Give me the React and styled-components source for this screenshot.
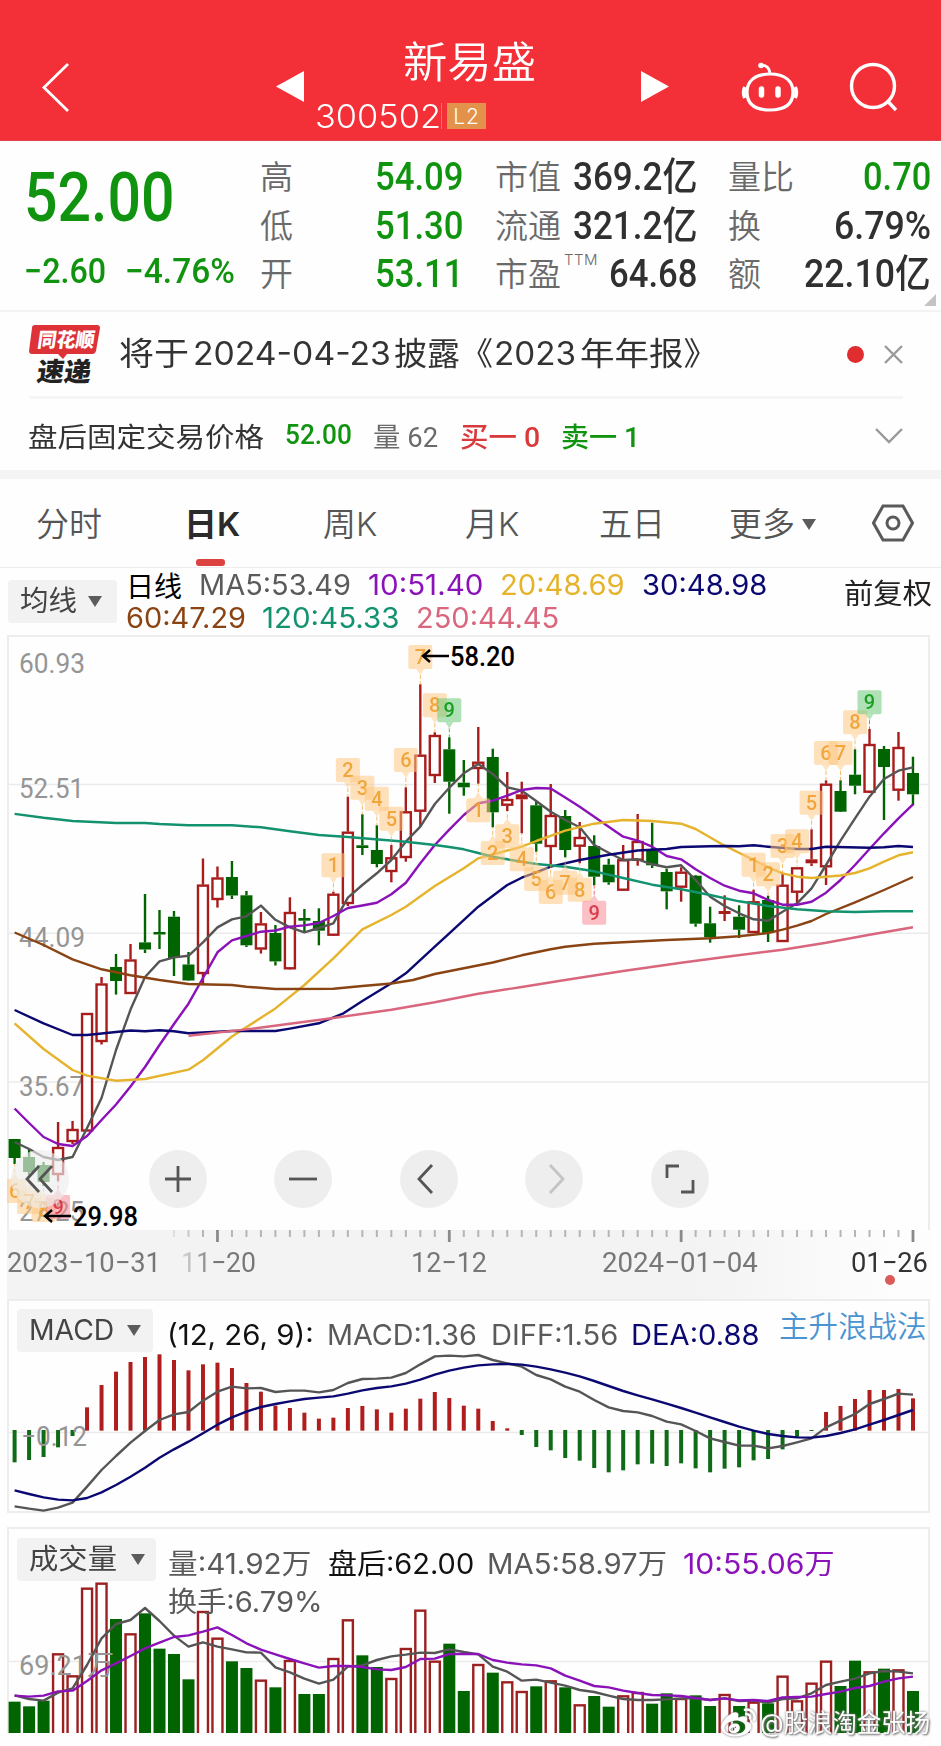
import React, { useLayoutEffect, useRef, useState } from "react";
import styled, { createGlobalStyle } from "styled-components";
import { FaWeibo } from "react-icons/fa";

const SANS = `Inter, "Noto Sans CJK SC", sans-serif`;
const DIN = `Roboto, "Noto Sans CJK SC", sans-serif`;
const RED = "#a81c1c";
const GREEN = "#006400";
const MA_COLORS = {
  5: "#555555",
  10: "#8a12b8",
  20: "#e5b32c",
  30: "#0b0872",
  60: "#8a4413",
  120: "#139270",
  250: "#d9667c"
};

const GlobalStyle = createGlobalStyle`
  * { box-sizing: border-box; }
  body { margin: 0; background: #fefefe; font-family: ${SANS}; }
`;

const Page = styled.div`
  width: 941px;
  height: 1746px;
  overflow: hidden;
  background: #fefefe;
  color: #333;
`;

// ---------- text squeezed to a fixed width ----------
const FitBox = styled.span`
  display: inline-block;
  flex: none;
  width: ${p => p.$width}px;
  margin-left: ${p => p.$gap || 0}px;
  color: ${p => p.$color || "inherit"};
  white-space: nowrap;
`;
const FitInner = styled.span`
  display: inline-block;
  transform-origin: left center;
`;
function Fit({ width, gap, color, children }) {
  const ref = useRef(null);
  const [scale, setScale] = useState(1);
  useLayoutEffect(() => {
    setScale(width / ref.current.offsetWidth);
  }, [width, children]);
  return (
    <FitBox $width={width} $gap={gap} $color={color}>
      <FitInner ref={ref} style={{ transform: `scaleX(${scale})` }}>
        {children}
      </FitInner>
    </FitBox>
  );
}

// ---------- header ----------
const Header = styled.header`
  display: flex;
  align-items: flex-start;
  height: 141px;
  padding: 0 38px 0 41px;
  background: #f32f37;
  color: #fff;
  border-bottom: 1px solid #d9474d;
`;
const HeaderIcon = styled.svg`
  flex: none;
  margin-top: ${p => p.$top}px;
  margin-left: ${p => p.$left || 0}px;
  overflow: visible;
`;
const TitleBlock = styled.div`
  width: 337px;
  padding-top: 31px;
`;
const StockName = styled.div`
  padding-left: 99px;
  font-size: 43px;
  line-height: 62px;
  font-weight: 350;
`;
const StockCode = styled.div`
  display: flex;
  align-items: center;
  height: 46px;
  padding-left: 11px;
  font-size: 33px;
  font-weight: 300;
`;
const LevelTag = styled.span`
  display: flex;
  align-items: center;
  justify-content: center;
  width: 39px;
  height: 26px;
  margin-left: 6px;
  background: #e2924a;
  font-size: 21px;
  letter-spacing: 1px;
  box-shadow: -5px 0 0 0 #f32f37, -6px 0 0 0 #ee7a50;
`;

// ---------- quote ----------
const Quote = styled.section`
  position: relative;
  display: flex;
  height: 171px;
  padding: 12px 10px 0 24px;
  border-bottom: 2px solid #f3f3f3;
  font-family: ${DIN};
  font-weight: 500;
`;
const PriceBlock = styled.div`
  width: 236px;
  color: #109410;
`;
const Price = styled.div`
  height: 95px;
  padding-top: 6px;
  font-size: 68px;
  line-height: 79px;
`;
const Change = styled.div`
  padding-top: 1px;
  font-size: 35px;
  line-height: 46px;
`;
const QuoteColumn = styled.div`
  width: ${p => p.$width}px;
  margin-right: ${p => p.$gap || 0}px;
`;
const QuoteRow = styled.div`
  display: flex;
  align-items: center;
  justify-content: space-between;
  height: 48.4px;
  font-size: 39px;
  line-height: 48px;
  color: ${p => (p.$down ? "#109410" : "#303030")};
`;
const QuoteLabel = styled.span`
  position: relative;
  padding-top: 2px;
  color: #6a6a6a;
  font-size: 33px;
  font-weight: 350;
`;
const Ttm = styled.sup`
  position: absolute;
  left: 69px;
  top: 3px;
  font-family: ${SANS};
  font-size: 15px;
  line-height: 15px;
  letter-spacing: 0.5px;
`;
const Corner = styled.i`
  position: absolute;
  right: 5px;
  bottom: 4px;
  border: 6px solid #c4c4c4;
  border-top-color: transparent;
  border-left-color: transparent;
`;

// ---------- notices ----------
const Notice = styled.div`
  display: flex;
  align-items: center;
  height: 87px;
  margin: 0 38px 0 29px;
  border-bottom: 3px solid #f5f5f5;
  font-size: 32px;
  line-height: 44px;
  color: #333;
`;
const Dot = styled.i`
  width: 17px;
  height: 17px;
  margin-left: auto;
  margin-right: 20px;
  border-radius: 50%;
  background: #e02e30;
`;
const AfterHours = styled.div`
  display: flex;
  align-items: center;
  height: 71px;
  padding: 1px 38px 0 28px;
  font-family: ${DIN};
  font-size: 27px;
  > svg {
    margin-left: auto;
  }
`;
const Strong = styled.b`
  font-weight: 500;
`;
const Band = styled.div`
  height: 9px;
  background: #f4f4f4;
`;

// ---------- tabs ----------
const Tabs = styled.nav`
  display: flex;
  align-items: center;
  height: 89px;
  padding-left: 36px;
  border-bottom: 1px solid #ececec;
  font-size: 33px;
  color: #555;
`;
const Tab = styled.div`
  position: relative;
  flex: none;
  width: ${p => p.$width}px;
  height: 88px;
  line-height: 90px;
  white-space: nowrap;
  font-weight: ${p => (p.$active ? 600 : 350)};
  color: ${p => (p.$active ? "#2b2b2b" : "#555")};
  &::after {
    content: "";
    display: ${p => (p.$active ? "block" : "none")};
    position: absolute;
    left: 12px;
    bottom: 1px;
    width: 29px;
    height: 7px;
    border-radius: 3px;
    background: #dc4340;
  }
`;
const Triangle = styled.i`
  display: inline-block;
  flex: none;
  margin-left: ${p => p.$left || 0}px;
  margin-bottom: ${p => p.$lift || 0}px;
  vertical-align: middle;
  border: 7.5px solid transparent;
  border-top: 11px solid #5c5c5c;
  border-bottom: 0;
`;

// ---------- indicator legends ----------
const Select = styled.div`
  display: flex;
  flex: none;
  align-items: center;
  width: ${p => p.$width}px;
  height: 43px;
  padding-left: 12px;
  border-radius: 4px;
  background: #f2f2f2;
  color: #444;
  font-size: 28px;
  line-height: 40px;
  > span {
    margin-bottom: 2px;
  }
`;
const MaBar = styled.div`
  display: flex;
  align-items: flex-start;
  height: 67px;
  padding: 12px 9px 0 8px;
  font-size: 28px;
`;
const Legend = styled.div`
  margin-top: ${p => p.$top || 0}px;
  margin-left: ${p => p.$left || 0}px;
`;
const LegendLine = styled.div`
  display: flex;
  align-items: center;
  height: ${p => p.$height || 33}px;
  font-size: 28px;
  color: #5a5a5a;
`;
const Adjust = styled.div`
  margin-left: auto;
  line-height: 28px;
  color: #222;
`;

// ---------- panels ----------
const Panel = styled.section`
  position: relative;
  width: 923px;
  height: ${p => p.$height}px;
  margin: 0 0 ${p => p.$gap || 0}px 7px;
  border: 2px solid #ededed;
  border-bottom-width: ${p => (p.$open ? 0 : 2)}px;
`;
const Plot = styled.svg`
  position: absolute;
  left: -2px;
  top: -2px;
`;
const TickMarks = styled.svg`
  position: absolute;
  left: 0;
  top: -2px;
`;
const PanelHead = styled.div`
  position: relative;
  display: flex;
  align-items: flex-start;
  padding: ${p => p.$top}px 0 0 8px;
`;
const Strategy = styled.div`
  margin-left: 20px;
  color: #4b94d2;
  font-size: 29.5px;
  line-height: 34px;
  font-weight: 350;
`;
const Controls = styled.div`
  position: absolute;
  left: 2px;
  bottom: 22px;
  display: flex;
  gap: 67.6px;
`;
const RoundButton = styled.button`
  display: flex;
  align-items: center;
  justify-content: center;
  width: 58px;
  height: 58px;
  padding: 0;
  margin-right: ${p => (p.$first ? 12 : 0)}px;
  border: 0;
  border-radius: 50%;
  background: ${p => (p.$first ? "rgba(236,236,236,0.65)" : "#eeeeee")};
  color: ${p => (p.$muted ? "#c4c4c4" : "#555")};
`;
const Axis = styled.div`
  position: relative;
  width: 923px;
  height: 69px;
  margin-left: 7px;
  background: linear-gradient(to right, #f3f3f3 75%, #fdfdfd 96%);
`;
const AxisDates = styled.div`
  display: flex;
  padding-top: 16px;
  color: #777;
  font-family: ${DIN};
  font-size: 28px;
  line-height: 34px;
`;
const AxisDot = styled.i`
  position: absolute;
  right: 35px;
  top: 45px;
  width: 10px;
  height: 10px;
  border-radius: 50%;
  background: #dc5a5a;
`;
const Fade = styled.span`
  background: linear-gradient(to right, #d8d8d8, #777 45%);
  background-clip: text;
  color: transparent;
`;
const Watermark = styled.div`
  position: absolute;
  right: -2px;
  bottom: -8px;
  display: flex;
  align-items: center;
  color: #fff;
  font-size: 25px;
  line-height: 36px;
  text-shadow: 0 0 3px #777, 1px 1px 2px #777;
  svg {
    margin-right: 4px;
    filter: drop-shadow(0 0 1px #666);
  }
`;

const cx = i => 14.6 + i * 14.49;

// open/close top, bottom, high, low; u = hollow rise, d = fall, r = solid rise
const CANDLES = [
  ["d", 1139, 1158, 1139, 1164], ["d", 1157, 1172, 1149, 1175], ["d", 1165, 1182, 1162, 1186],
  ["u", 1147, 1175, 1122, 1181], ["u", 1129, 1142, 1121, 1144], ["u", 1013, 1131.5, 1013, 1131.5],
  ["u", 983.5, 1042, 977, 1044.5], ["d", 967, 981, 954, 994.6], ["u", 959.5, 994, 944, 994],
  ["d", 942.4, 949.5, 894, 953], ["d", 932, 934.5, 910, 949], ["d", 916.7, 958, 911, 976],
  ["d", 964.5, 980.5, 952, 980], ["u", 884.6, 974, 858.5, 984], ["u", 877.5, 900, 866.5, 907.6],
  ["d", 877, 895.5, 861, 899], ["d", 895.3, 945.3, 891, 947], ["u", 923.4, 949.5, 912, 953.5],
  ["d", 933, 961.4, 925, 965.5], ["u", 912, 969.3, 897.3, 969], ["d", 918, 920.7, 909, 931.7],
  ["d", 921, 930.7, 908.3, 945.3], ["u", 893.7, 935.7, 891.7, 935], ["u", 831.7, 904, 796.7, 906],
  ["d", 845.3, 848, 814.3, 855], ["d", 850, 864, 825.3, 867.3], ["u", 857.3, 872, 845, 882.3],
  ["u", 811.3, 858, 787.3, 861.7], ["u", 754.7, 811.7, 684.3, 826.7], ["u", 735, 776, 732.3, 783],
  ["d", 749.3, 781.7, 737.3, 813.7], ["d", 782.7, 787.3, 760, 795.7], ["u", 761.7, 769, 727, 783.7],
  ["d", 757, 812.3, 748.7, 827.3], ["u", 799, 805.7, 772, 811], ["r", 794.3, 799.3, 781.7, 833.3],
  ["d", 805.3, 843.7, 801.3, 851.7], ["u", 815, 847, 784, 864.3], ["d", 816, 850, 810, 857.3],
  ["u", 837, 846.7, 822, 863.3], ["d", 846, 876.7, 835.3, 885.3], ["d", 864.7, 882.3, 858.7, 884.7],
  ["u", 859.3, 890.7, 845, 890], ["u", 841, 860.7, 814, 865.7], ["d", 849.7, 865.3, 822.7, 868],
  ["d", 872, 891.3, 868.7, 909.3], ["u", 871.7, 887.7, 867.3, 901.7], ["d", 875.7, 923.7, 875, 926.7],
  ["d", 923.3, 937.3, 906.7, 942.7], ["r", 911, 914, 895.3, 921], ["d", 916.7, 929.7, 905.3, 938],
  ["u", 901.3, 933, 889.7, 933], ["d", 900, 933, 895.7, 942], ["u", 884.7, 942, 873.3, 942],
  ["u", 867.3, 892.7, 867.3, 904], ["r", 859.3, 863.3, 829.3, 866], ["u", 783.7, 867.3, 780.3, 885],
  ["d", 791, 811.7, 780.3, 811], ["d", 774.7, 785.7, 749.3, 794.3], ["u", 744, 792.7, 729, 792],
  ["d", 749, 767, 746, 820], ["u", 747, 790.7, 732, 800.7], ["d", 773, 794.3, 756.7, 805.3]
];

// [candle index, top of the flag, digit, pointer side]
const FLAGS = [
  [0, 1179, 6, "up"], [1, 1190, 7, "up"], [2, 1198, 8, "up"], [3, 1195, 9, "up"],
  [22, 853.3, 1], [23, 758, 2], [24, 775.7, 3], [25, 786.7, 4], [26, 806.7, 5], [27, 748, 6],
  [28, 645, 7], [29, 693.3, 8], [30, 698.3, 9],
  [32, 798.3, 1, "up"], [33, 841, 2, "up"], [34, 824.3, 3, "up"], [35, 847.3, 4, "up"],
  [36, 867, 5, "up"], [37, 880, 6, "up"], [38, 870.7, 7, "up"], [39, 877.7, 8, "up"], [40, 900.7, 9, "up"],
  [51, 852.7, 1], [52, 862.3, 2], [53, 834, 3], [54, 829.3, 4], [55, 790.7, 5], [56, 741, 6],
  [57, 741, 7], [58, 710.3, 8], [59, 690.3, 9]
];

const MA = {
  5: [1142, 1149, 1157, 1160, 1157, 1128, 1098, 1050, 1009.6, 977, 961.4, 957.4, 955.8, 942.4, 927.4,
    919.4, 916.3, 905.6, 919.8, 927.4, 932.3, 928, 923.3, 897.7, 885, 873.3, 860, 841.7, 826.7, 804,
    787.7, 773.3, 764, 774, 787.3, 790.7, 801, 811.7, 820, 827.3, 845, 852.7, 860, 859.3, 864.3, 867.3,
    865.3, 880, 896.7, 906, 913.3, 919.3, 920.7, 911.7, 903.3, 888.3, 865, 840.7, 818.3, 796.7, 779,
    770.7, 767.3],
  10: [1108.5, 1123, 1137, 1144, 1146, 1136, 1120, 1104.5, 1086.5, 1067, 1045, 1024, 1003.7, 978, 952.3,
    940.4, 936, 931.7, 930.5, 926.6, 925.4, 923, 916, 908, 905.5, 902.7, 894.3, 882.7, 863.3, 845,
    829.7, 815, 803.3, 800.7, 795.7, 790, 788, 788.5, 797.5, 806.7, 816.7, 826.7, 836.7, 840.7, 846.7,
    856, 859.3, 869.3, 878, 885.7, 890.7, 893.3, 900, 904.7, 904.7, 901.7, 892.7, 880, 865, 849, 833.3,
    818.3, 804.3],
  20: [[0, 1023.4], [2, 1049], [4, 1070], [5, 1075.6], [7, 1080.8], [9, 1079], [12, 1069.7], [13, 1060.2],
    [15, 1036.5], [18, 1008.4], [20, 985], [22, 958.3], [24, 929.3], [26, 915], [27, 906.7], [29, 886],
    [31, 868.3], [32, 858.3], [33, 854.5], [35, 846.7], [36, 841], [38, 830.7], [40, 823.7], [42, 820],
    [44, 821], [46, 823.7], [47, 829], [49, 845.7], [51, 860], [52, 867.3], [53, 873.3], [54, 876.7],
    [55, 878], [56, 876.7], [57, 875.5], [58, 873], [59, 868.3], [60, 861.7], [61, 855.3], [62, 852.3]],
  30: [[0, 1010], [2, 1023.4], [4, 1035], [5, 1035], [8, 1030.5], [9, 1031.3], [10, 1030.2], [11, 1031.3],
    [12, 1033.3], [13, 1032.5], [15, 1031], [18, 1031], [19, 1028.6], [21, 1023.3], [22.7, 1013.3],
    [24, 1001], [26, 983.3], [27, 973.3], [29, 946.7], [30, 933.3], [32, 906.7], [34, 885], [35, 877.7],
    [36, 872.3], [37, 866.7], [39, 860], [41, 854.7], [43, 850.5], [45, 849], [46, 847], [48, 846.3],
    [49, 846], [50, 846.3], [51, 845.3], [52, 846.7], [54, 849], [55, 849], [56, 846.7], [59, 847.7],
    [60, 847.3], [61, 846], [62, 847]],
  60: [[0, 932.5], [2, 945], [4, 959.4], [6, 969.3], [8, 975.2], [10, 980], [12, 984], [15, 985],
    [16, 986.7], [18, 989], [22, 988.7], [24, 986], [26, 983.5], [27.5, 980], [29, 974], [31, 968.3],
    [33, 962.5], [35, 955.3], [37, 949.3], [38, 946.7], [40, 943.7], [42, 942.3], [45, 940], [48, 938.3],
    [50, 936.3], [52, 933], [53, 929.7], [54, 925.7], [55, 921], [56, 914], [58, 902.3], [60, 890], [62, 877]],
  120: [[0, 813.9], [2, 817.8], [4, 821], [7, 823], [9, 823], [10, 824], [12, 825.3], [15, 825.3],
    [17, 827.3], [19, 831.3], [21, 835], [23, 837], [27, 841.7], [29, 845], [30, 847], [31, 849.3],
    [32, 853], [33, 856.7], [34, 859.3], [36, 864], [38, 866.7], [40, 871.3], [42, 878], [44, 884.7],
    [46, 889.3], [48, 895], [50, 901.3], [52, 906], [54, 909.3], [56, 911.3], [58, 912], [60, 911.3], [62, 911.3]],
  250: [[12, 1035.7], [16, 1029.4], [19, 1023.8], [22, 1018], [26, 1009.7], [29, 1002.3], [32, 993.7],
    [35, 987], [38, 980], [42, 971], [46, 962.7], [49, 957], [53, 949.7], [56, 942.7], [59, 934.7], [62, 927.3]]
};

// MACD and volume values are in thirds of a pixel, measured down from the panel origin
const HIST = [
  517, 510, 501, 472, 438, 352, 285, 245, 216, 201, 193, 210, 241, 223, 218, 234, 279, 305, 347, 354, 368,
  386, 383, 354, 348, 358, 368, 356, 326, 306, 324, 347, 356, 393, 415, 435, 471, 481, 504, 512, 534, 547,
  541, 523, 521, 528, 520, 535, 547, 536, 532, 511, 507, 478, 444, 423, 366, 348, 327, 300, 300, 297, 325
];
const DIFF = [
  649, 656, 662, 653, 638, 590, 540, 498, 458, 423, 390, 373, 366, 332, 305, 290, 295, 294, 306, 302, 302,
  307, 300, 279, 267, 266, 263, 249, 223, 199, 197, 199, 195, 210, 220, 230, 255, 268, 290, 305, 330, 352,
  363, 367, 378, 395, 403, 423, 445, 456, 467, 467, 475, 468, 457, 445, 412, 392, 372, 342, 327, 311, 314
];
const DEA = [
  601, 612, 622, 629, 631, 624, 607, 585, 560, 533, 503, 478, 455, 430, 404, 382, 365, 351, 342, 334, 327,
  323, 319, 311, 301, 294, 289, 281, 269, 254, 242, 233, 226, 223, 222, 224, 230, 238, 248, 259, 273, 288,
  303, 316, 328, 341, 354, 368, 382, 396, 410, 422, 432, 438, 442, 443, 438, 429, 418, 404, 390, 375, 360
];
const VOLUME = [
  545, 559, 542, 400, 466, 203, 188, 297, 340, 280, 386, 402, 478, 273, 353, 424, 444, 479, 502, 420, 522,
  522, 414, 298, 406, 441, 474, 384, 269, 422, 371, 513, 432, 458, 484, 513, 499, 481, 502, 553, 528, 560,
  526, 516, 551, 520, 534, 526, 558, 522, 558, 545, 550, 467, 541, 488, 422, 498, 422, 454, 446, 448, 513
];
const VOL5 = [
  526, 537, 542, 518, 505, 435, 355, 312, 300, 264, 303, 347, 380, 367, 380, 388, 397, 398, 442, 457, 476,
  491, 479, 440, 436, 420, 409, 404, 398, 399, 388, 396, 403, 440, 455, 482, 479, 488, 497, 510, 516, 527,
  537, 540, 540, 538, 535, 534, 540, 535, 543, 542, 548, 537, 535, 520, 495, 485, 476, 460, 453, 455, 460
];
const VOL10 = [
  527, 530, 527, 514, 512, 483, 451, 430, 408, 385, 368, 351, 346, 335, 322, 345, 370, 389, 403, 417, 430,
  443, 438, 438, 441, 448, 450, 441, 417, 416, 402, 402, 402, 420, 428, 433, 436, 445, 467, 482, 498, 502,
  512, 519, 525, 526, 528, 534, 540, 535, 541, 540, 543, 532, 531, 530, 522, 515, 504, 498, 485, 475, 470
];

// indexes of the filled volume bars
const SOLID_VOLUME = [0, 1, 2, 7, 9, 10, 11, 12, 15, 16, 18, 20, 21, 24, 25, 30, 31, 33, 36, 38, 40, 41,
  44, 45, 47, 48, 50, 52, 57, 58, 60, 62];

const toPoints = (list, y = v => v) =>
  list.map((p, i) => (Array.isArray(p) ? `${cx(p[0])},${y(p[1])}` : `${cx(i)},${y(p)}`)).join(" ");

function Line({ data, y, color, width = 2.4 }) {
  return (
    <polyline points={toPoints(data, y)} fill="none" stroke={color} strokeWidth={width} strokeLinejoin="round" />
  );
}

function ScaleText({ x, y, width, color = "#959595", weight = 400, children }) {
  return (
    <text x={x} y={y} textLength={width} lengthAdjust="spacingAndGlyphs" fontFamily={DIN}
      fontSize="28" fontWeight={weight} fill={color}>
      {children}
    </text>
  );
}

function Flag({ index, top, digit, up }) {
  const x = cx(index);
  const [bg, fg] =
    digit !== 9 ? ["#fdc981", "#efa02f"] : up ? ["#f88a96", "#d9303c"] : ["#6cc878", "#0b9a12"];
  const wick = CANDLES[index][up ? 4 : 3];
  return (
    <g>
      <path
        d={up ? `M${x - 4} ${top}l4 -6l4 6z` : `M${x - 4} ${top + 24}l4 6l4 -6z`}
        fill={bg}
        opacity="0.5"
      />
      <rect x={x - 12} y={top} width="24" height="24" rx="2" fill={bg} opacity="0.55" />
      <line x1={x} x2={x} y1={up ? top - 6 : top + 30} y2={wick} stroke={fg} strokeDasharray="4 2" opacity="0.7" />
      <text x={x} y={top + 19} textAnchor="middle" fontFamily={DIN} fontSize="20" fontWeight="500" fill={fg} opacity="0.9">
        {digit}
      </text>
    </g>
  );
}

function Candle({ index, data }) {
  const [kind, top, bottom, high, low] = data;
  const x = cx(index);
  const color = kind === "d" ? GREEN : RED;
  return (
    <g stroke={color} strokeWidth="2.4">
      <line x1={x} x2={x} y1={high} y2={top} />
      <line x1={x} x2={x} y1={bottom} y2={low} />
      {kind === "u" ? (
        <rect x={x - 5} y={top + 1} width="10" height={bottom - top - 2} fill="#fff" fillOpacity="0.7" />
      ) : (
        <rect x={x - 6} y={top} width="12" height={bottom - top} fill={color} stroke="none" />
      )}
    </g>
  );
}

function Arrow({ x, y }) {
  return (
    <path d={`M${x + 27} ${y}H${x + 1}M${x + 8} ${y - 6}L${x + 1} ${y}l7 6`} fill="none" stroke="#000" strokeWidth="2.4" />
  );
}

function KLineChart() {
  return (
    <Plot width="923" height="596" viewBox="7 635 923 596">
      {[784.5, 933.3, 1082].map(y => (
        <line key={y} x1="8" x2="929" y1={y} y2={y} stroke="#ebebeb" strokeWidth="1.5" />
      ))}
      <ScaleText x={19} y={673} width={66}>60.93</ScaleText>
      <ScaleText x={19} y={798} width={65}>52.51</ScaleText>
      <ScaleText x={19} y={947} width={66}>44.09</ScaleText>
      <ScaleText x={19} y={1096} width={65}>35.67</ScaleText>
      <ScaleText x={19} y={1221} width={65}>27.25</ScaleText>
      {CANDLES.map((c, i) => (
        <Candle key={i} index={i} data={c} />
      ))}
      {Object.keys(MA).map(k => (
        <Line key={k} data={MA[k]} color={MA_COLORS[k]} />
      ))}
      {FLAGS.map(([i, top, digit, side]) => (
        <Flag key={i} index={i} top={top} digit={digit} up={side === "up"} />
      ))}
      <Arrow x={422} y={656} />
      <ScaleText x={450} y={666} width={65} color="#000" weight={500}>58.20</ScaleText>
      <Arrow x={44} y={1216} />
      <ScaleText x={73} y={1226} width={65} color="#000" weight={500}>29.98</ScaleText>
    </Plot>
  );
}

function MacdChart() {
  const y = v => 1290 + v / 3;
  return (
    <Plot width="923" height="214" viewBox="7 1299 923 214">
      <line x1="8" x2="929" y1="1432.5" y2="1432.5" stroke="#ebebeb" strokeWidth="1.5" />
      {HIST.map((v, i) => (
        <line key={i} x1={cx(i)} x2={cx(i)} y1={y(v < 420 ? 422 : 420)} y2={y(v)} strokeWidth="4"
          stroke={v < 420 ? "#b01d1d" : "#0f6b17"} />
      ))}
      <ScaleText x={21} y={1446} width={66}>−0.12</ScaleText>
      <Line data={DIFF} y={y} color={MA_COLORS[5]} />
      <Line data={DEA} y={y} color={MA_COLORS[30]} />
    </Plot>
  );
}

function VolumeChart() {
  const y = v => 1520 + v / 3;
  return (
    <Plot width="923" height="206" viewBox="7 1527 923 206">
      <line x1="8" x2="929" y1="1661.5" y2="1661.5" stroke="#ebebeb" strokeWidth="1.5" />
      {VOLUME.map((v, i) =>
        SOLID_VOLUME.includes(i) ? (
          <rect key={i} x={cx(i) - 6} y={y(v)} width="12" height={1733 - y(v)} fill={GREEN} />
        ) : (
          <rect key={i} x={cx(i) - 5} y={y(v) + 1} width="10" height={1740 - y(v)} fill="#fff" stroke="#9c2020" strokeWidth="2.4" />
        )
      )}
      <ScaleText x={19} y={1675} width={95}>69.21万</ScaleText>
      <Line data={VOL5} y={y} color={MA_COLORS[5]} />
      <Line data={VOL10} y={y} color={MA_COLORS[10]} />
    </Plot>
  );
}

function Ticks() {
  return (
    <TickMarks width="923" height="16" viewBox="7 1228 923 16">
      {CANDLES.map((_, i) => {
        if (i < 11) return null;
        const major = (i + 2) % 16 === 0;
        return (
          <line key={i} x1={cx(i)} x2={cx(i)} y1="1230" y2={major ? 1242 : 1237}
            stroke={major ? "#8a8a8a" : "#b5b5b5"} strokeWidth={major ? 2.8 : 2} opacity={i < 13 ? (i - 10) / 3 : 1} />
        );
      })}
    </TickMarks>
  );
}

function Icon({ d, size = 30, width = 2.8 }) {
  return (
    <svg width={size} height={size} viewBox="0 0 30 30" fill="none" stroke="currentColor" strokeWidth={width}>
      <path d={d} />
    </svg>
  );
}

function NewsLogo() {
  return (
    <svg width="72" height="60" viewBox="0 0 72 60">
      <path d="M6 1H68q3 0 3 3L67 27q-1 3 -3 3H38l-4 5l-5 -5H3q-3 0 -3 -3L3 4q0 -3 3 -3z" fill="#dc3238" />
      <g fontFamily={SANS} fontWeight="900" transform="skewX(-8)">
        <text x="11" y="23.5" fontSize="20" textLength="57" lengthAdjust="spacingAndGlyphs" fill="#fff">同花顺</text>
        <text x="15" y="57" fontSize="26" textLength="54" lengthAdjust="spacingAndGlyphs" fill="#222">速递</text>
      </g>
    </svg>
  );
}

export default function App() {
  return (
    <Page>
      <GlobalStyle />
      <Header>
        <HeaderIcon $top={63} width="29" height="49" fill="none" stroke="#fff" strokeWidth="2.8">
          <path d="M27 1L3 24.5L27 48" />
        </HeaderIcon>
        <HeaderIcon $top={71} $left={206} width="28" height="31" fill="#fff">
          <path d="M28 0V31L0 15.5z" />
        </HeaderIcon>
        <TitleBlock>
          <StockName><Fit width={133}>新易盛</Fit></StockName>
          <StockCode>
            <Fit width={126}>300502</Fit>
            <LevelTag>L2</LevelTag>
          </StockCode>
        </TitleBlock>
        <HeaderIcon $top={71} width="28" height="31" fill="#fff">
          <path d="M0 0V31L28 15.5z" />
        </HeaderIcon>
        <HeaderIcon $top={61} $left={73} width="58" height="52" fill="none" stroke="#fff" strokeWidth="3.2">
          <circle cx="19" cy="4.5" r="2.8" fill="#fff" stroke="none" />
          <path d="M19 4q8 0 9 8" strokeWidth="2.8" />
          <path d="M28 13c15 0 23 7 23 18s-7 18 -23 18s-23 -7 -23 -18s8 -18 23 -18z" />
          <path d="M3 26q-2.5 5.5 0 11M53 26q2.5 5.5 0 11" strokeWidth="4" />
          <path d="M19.5 28v6M36 28v6" strokeWidth="5.5" strokeLinecap="round" />
        </HeaderIcon>
        <HeaderIcon $top={62} $left={49} width="50" height="50" fill="none" stroke="#fff" strokeWidth="3.4">
          <circle cx="24" cy="24" r="21.5" />
          <path d="M38 38.5l9 9.5" />
        </HeaderIcon>
      </Header>

      <Quote>
        <PriceBlock>
          <Price><Fit width={151}>52.00</Fit></Price>
          <Change>
            <Fit width={82}>−2.60</Fit>
            <Fit width={110} gap={19}>−4.76%</Fit>
          </Change>
        </PriceBlock>
        <QuoteColumn $width={204} $gap={31}>
          <QuoteRow $down><QuoteLabel>高</QuoteLabel><Fit width={89}>54.09</Fit></QuoteRow>
          <QuoteRow $down><QuoteLabel>低</QuoteLabel><Fit width={89}>51.30</Fit></QuoteRow>
          <QuoteRow $down><QuoteLabel>开</QuoteLabel><Fit width={89}>53.11</Fit></QuoteRow>
        </QuoteColumn>
        <QuoteColumn $width={203} $gap={30}>
          <QuoteRow><QuoteLabel>市值</QuoteLabel><Fit width={125}>369.2亿</Fit></QuoteRow>
          <QuoteRow><QuoteLabel>流通</QuoteLabel><Fit width={125}>321.2亿</Fit></QuoteRow>
          <QuoteRow><QuoteLabel>市盈<Ttm>TTM</Ttm></QuoteLabel><Fit width={89}>64.68</Fit></QuoteRow>
        </QuoteColumn>
        <QuoteColumn $width={203}>
          <QuoteRow $down><QuoteLabel>量比</QuoteLabel><Fit width={68}>0.70</Fit></QuoteRow>
          <QuoteRow><QuoteLabel>换</QuoteLabel><Fit width={97}>6.79%</Fit></QuoteRow>
          <QuoteRow><QuoteLabel>额</QuoteLabel><Fit width={127}>22.10亿</Fit></QuoteRow>
        </QuoteColumn>
        <Corner />
      </Quote>

      <Notice>
        <NewsLogo />
        <Fit width={70} gap={18}>将于</Fit>
        <Fit width={198} gap={4}>2024-04-23</Fit>
        <Fit width={99} gap={3}>披露《</Fit>
        <Fit width={82} gap={1}>2023</Fit>
        <Fit width={138} gap={4}>年年报》</Fit>
        <Dot />
        <svg width="19" height="19" stroke="#999" strokeWidth="2.4">
          <path d="M1 1L18 18M18 1L1 18" />
        </svg>
      </Notice>
      <AfterHours>
        <Fit width={236}>盘后固定交易价格</Fit>
        <Fit width={67} gap={21}><Strong style={{ color: "#109410" }}>52.00</Strong></Fit>
        <Fit width={65} gap={21} color="#6a6a6a">量 62</Fit>
        <Fit width={80} gap={22} color="#d83a3c"><Strong>买一 0</Strong></Fit>
        <Fit width={79} gap={21} color="#109410"><Strong>卖一 1</Strong></Fit>
        <svg width="28" height="17" fill="none" stroke="#999" strokeWidth="2.4">
          <path d="M1 2L14 15L27 2" />
        </svg>
      </AfterHours>
      <Band />

      <Tabs>
        <Tab $width={148}>分时</Tab>
        <Tab $width={139} $active>日K</Tab>
        <Tab $width={142}>周K</Tab>
        <Tab $width={134}>月K</Tab>
        <Tab $width={130}>五日</Tab>
        <Tab $width={143}>更多<Triangle $left={7} $lift={6} /></Tab>
        <svg width="42" height="38" fill="none" stroke="#5a5a5a" strokeWidth="3">
          <path d="M11 2H31L40.5 19L31 36H11L1.5 19z" />
          <circle cx="21" cy="19" r="6" />
        </svg>
      </Tabs>

      <MaBar>
        <Select $width={109}><Fit width={57}>均线</Fit><Triangle $left={11} /></Select>
        <Legend $top={-12} $left={9}>
          <LegendLine>
            <Fit width={56} color="#000">日线</Fit>
            <Fit width={152} gap={17}>MA5:53.49</Fit>
            <Fit width={115} gap={17} color={MA_COLORS[10]}>10:51.40</Fit>
            <Fit width={125} gap={17} color={MA_COLORS[20]}>20:48.69</Fit>
            <Fit width={125} gap={17} color={MA_COLORS[30]}>30:48.98</Fit>
          </LegendLine>
          <LegendLine>
            <Fit width={120} color={MA_COLORS[60]}>60:47.29</Fit>
            <Fit width={137} gap={16} color={MA_COLORS[120]}>120:45.33</Fit>
            <Fit width={143} gap={17} color={MA_COLORS[250]}>250:44.45</Fit>
          </LegendLine>
        </Legend>
        <Adjust><Fit width={88}>前复权</Fit></Adjust>
      </MaBar>

      <Panel $height={595} $open>
        <KLineChart />
        <Controls>
          <RoundButton $first><Icon d="M14 2L2 15L14 28M27 2L15 15L27 28" /></RoundButton>
          <RoundButton><Icon d="M15 2V28M2 15H28" /></RoundButton>
          <RoundButton><Icon d="M1 15H29" /></RoundButton>
          <RoundButton><Icon d="M18 1L5 15L18 29" /></RoundButton>
          <RoundButton $muted><Icon d="M11 1L24 15L11 29" /></RoundButton>
          <RoundButton><Icon d="M2 14V2H14M16 28H28V16" /></RoundButton>
        </Controls>
      </Panel>
      <Axis>
        <Ticks />
        <AxisDates>
          <Fit width={154}>2023−10−31</Fit>
          <Fit width={75} gap={20}><Fade>11−20</Fade></Fit>
          <Fit width={76} gap={155}>12−12</Fit>
          <Fit width={156} gap={115}>2024−01−04</Fit>
          <Fit width={77} gap={93} color="#333">01−26</Fit>
        </AxisDates>
        <AxisDot />
      </Axis>

      <Panel $height={214} $gap={14}>
        <MacdChart />
        <PanelHead $top={8}>
          <Select $width={136}><Fit width={85}>MACD</Fit><Triangle $left={13} /></Select>
          <Legend $top={9} $left={14}>
            <LegendLine>
              <Fit width={147} color="#111">(12, 26, 9):</Fit>
              <Fit width={150} gap={13}>MACD:1.36</Fit>
              <Fit width={127} gap={14}>DIFF:1.56</Fit>
              <Fit width={128} gap={13} color={MA_COLORS[30]}>DEA:0.88</Fit>
            </LegendLine>
          </Legend>
          <Strategy><Fit width={148}>主升浪战法</Fit></Strategy>
        </PanelHead>
      </Panel>

      <Panel $height={206} $open>
        <VolumeChart />
        <PanelHead $top={9}>
          <Select $width={139}><Fit width={88}>成交量</Fit><Triangle $left={14} /></Select>
          <Legend $top={5} $left={12}>
            <LegendLine $height={38}>
              <Fit width={143}>量:41.92万</Fit>
              <Fit width={146} gap={17} color="#111">盘后:62.00</Fit>
              <Fit width={180} gap={13}>MA5:58.97万</Fit>
              <Fit width={152} gap={16} color={MA_COLORS[10]}>10:55.06万</Fit>
            </LegendLine>
            <LegendLine $height={38}>
              <Fit width={155}>换手:6.79%</Fit>
            </LegendLine>
          </Legend>
        </PanelHead>
        <Watermark>
          <FaWeibo size={35} />
          <Fit width={170}>@股浪淘金张扬</Fit>
        </Watermark>
      </Panel>
    </Page>
  );
}
